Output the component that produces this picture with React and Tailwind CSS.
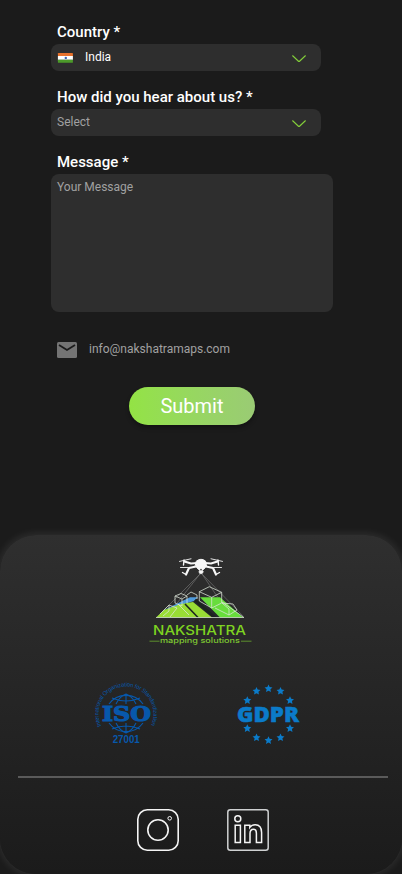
const star = (cx, cy, r) =>
  Array.from({ length: 10 }, (_, i) => {
    const a = (Math.PI / 5) * i - Math.PI / 2;
    const d = i % 2 ? r * 0.48 : r;
    return `${cx + d * Math.cos(a)},${cy + d * Math.sin(a)}`;
  }).join(" ");

const STARS = [
  [40.5, 13.7], [52.5, 16.2], [62, 25.5], [62, 53.5], [52.5, 62.7],
  [40.5, 65.5], [28.5, 62.7], [19.3, 53.5], [19.3, 25.5], [28.5, 16.2],
];

function Chevron() {
  return (
    <svg className="mt-[5px] h-2 w-4" viewBox="0 0 16 8" fill="none" stroke="#84cf3a" strokeWidth="1.1">
      <path d="M1.4 .5 7.2 6Q8 6.8 8.8 6L14.6 .5" />
    </svg>
  );
}

function Flag() {
  return (
    <svg className="mt-[3px] h-[10px] w-4" viewBox="0 0 16 10">
      <rect x=".9" width="15" height="3.4" rx=".6" fill="#e8722c" />
      <rect x=".9" y="3" width="15" height="3.8" fill="#fff" />
      <rect x=".9" y="6.7" width="15" height="3.1" rx=".6" fill="#4c9a2a" />
      <circle cx="8.8" cy="4.9" r="1.2" fill="#3f63b5" />
    </svg>
  );
}

function Field({ label, children }) {
  return (
    <div className="mb-[14px]">
      <label className="block h-[24px] pl-[6px] text-[15px] leading-[24px] font-medium text-white">{label}</label>
      <div className="flex h-[27px] w-[270px] items-center justify-between rounded-lg bg-[#2e2e2e] pr-[14px] pb-[2px] pl-[6px]">
        {children}
      </div>
    </div>
  );
}

function NakshatraLogo() {
  return (
    <svg className="h-24 w-28" viewBox="0 0 112 96">
      <path d="M55 22 12 65M55 22 29 55M57 22 98 64M57 22 78 53" stroke="#7c7c7c" strokeWidth=".6" fill="none" />
      <path d="M11 65.5 40 47 53 45.3H75L99 65.5Z" fill="#25292a" />
      <path d="M18 58.5 45 45.3H53L49 49 33 54Z" fill="#4f9bdc" />
      <path d="M11 65.5 19 58 36 52 48 50 67 65.5Z" fill="#99dd35" />
      <path d="M55 45.3H75L98 65.5H75Z" fill="#68dd3c" />
      <path d="M40 52 53 65.5" stroke="#1c2420" strokeWidth="1.6" />
      <path d="M50 48 70 65.5" stroke="#1c2420" strokeWidth="2.6" />
      <g stroke="#dce6d8" strokeWidth=".75" fill="none">
        <path d="M11 65.5H99L77 50" />
        <path d="M54.3 39.7 64.3 34.7 76.7 40.3V51L66.7 56 54.3 49ZM54.3 39.7 66.7 45.3 76.7 40.3M66.7 45.3V56" />
        <path d="M30 44 36 41.5 42 44V51M30 44 37 47 42 44M30 44V51L37 54V47M42 43 46 40 52 43V47" />
        <path d="M15 62 24 53 32 56 25 65M24 53V59L18 64M33 52 44 63M77 51 88 52 92 58 84 63 70 56M84 63V57L77 51" />
      </g>
      <g fill="#f7f7f7" stroke="#f7f7f7" strokeLinejoin="round" strokeLinecap="round">
        <path d="M51.5 9Q56 5.5 60.5 9L61.5 14 58.5 17.5H53.5L50.5 14Z" strokeWidth="1" />
        <path d="M52 11 46 11.5 39.5 9.5M60 11 66 11.5 72.5 9.5" fill="none" strokeWidth="2.2" />
        <path d="M51 14.5 44 16 41 22.5M61 14.5 68 16 71 22.5" fill="none" strokeWidth="2.2" />
        <path d="M34.5 9.4 46 6.8M66 6.8 77.5 9.4M35.5 15.5 43 15.5M69 15.5 76.5 15.5" fill="none" strokeWidth=".9" />
        <path d="M39 8 38.5 13M73 8 73.5 13M41 22.5 37.5 20.5M71 22.5 74.5 20.5" fill="none" strokeWidth="1.4" />
        <circle cx="56" cy="19.8" r="2" strokeWidth=".7" />
      </g>
      <circle cx="56" cy="17.6" r=".9" fill="#444" />
      <text x="8" y="82.6" textLength="93" lengthAdjust="spacingAndGlyphs" fontFamily="Inter, sans-serif" fontSize="12.6" fontWeight="500" fill="#7ed321">NAKSHATRA</text>
      <text x="15" y="91" textLength="80" lengthAdjust="spacingAndGlyphs" fontFamily="Inter, sans-serif" fontSize="7.3" fontWeight="500" fill="#7fc832">mapping solutions</text>
      <path d="M4.5 89.2H14.5M96 89.2H106.5" stroke="#6ba92f" strokeWidth=".8" />
    </svg>
  );
}

function IsoBadge() {
  return (
    <svg className="size-20" viewBox="0 0 80 80" fill="#0758ac">
      <path id="iso-arc" d="M16.3 51A27.5 27.5 0 1 1 65.7 51" fill="none" />
      <text fontFamily="Liberation Sans, sans-serif" fontSize="5.8">
        <textPath href="#iso-arc" textLength="110" lengthAdjust="spacing">International Organization for Standardization</textPath>
      </text>
      <g fill="none" stroke="#0758ac" strokeWidth="1.1">
        <path d="M24 29A21 21 0 0 1 58 29M24 48A21 21 0 0 0 58 48" />
        <path d="M31 29Q35 21 41 19Q47 21 51 29M31 48Q35 56 41 58Q47 56 51 48M41 19V29M41 48V58M27 23Q41 29 55 23M27 54Q41 48 55 54" />
      </g>
      <text x="17" y="45.8" textLength="49" lengthAdjust="spacingAndGlyphs" fontFamily="DejaVu Serif, serif" fontWeight="700" fontSize="21" stroke="#0758ac" strokeWidth="1.2">ISO</text>
      <text x="27.7" y="68" textLength="27" lengthAdjust="spacingAndGlyphs" fontFamily="Liberation Sans, sans-serif" fontWeight="700" fontSize="10.2">27001</text>
    </svg>
  );
}

function GdprBadge() {
  return (
    <svg className="size-20" viewBox="0 0 80 80" fill="#0b7bc9">
      {STARS.map(([x, y]) => (
        <polygon key={`${x}-${y}`} points={star(x, y, 4.2)} />
      ))}
      <text x="9" y="46.5" textLength="62" lengthAdjust="spacingAndGlyphs" fontFamily="Open Sans, sans-serif" fontWeight="800" fontSize="20.7" stroke="#0b7bc9" strokeWidth=".5">GDPR</text>
    </svg>
  );
}

export default function App() {
  return (
    <div className="flex h-[874px] w-[402px] flex-col overflow-hidden bg-[#1b1b1b] font-['Roboto',sans-serif]">
      <form className="h-[535px] shrink-0 pt-5 pl-[51px]">
        <Field label="Country *">
          <span className="flex items-center gap-3 text-xs text-white"><Flag />India</span>
          <Chevron />
        </Field>
        <Field label="How did you hear about us? *">
          <span className="text-xs text-[#a1a1a1]">Select</span>
          <Chevron />
        </Field>
        <label className="block h-6 pl-[6px] text-[15px] leading-6 font-medium text-white">Message *</label>
        <div className="h-[138px] w-[282px] rounded-lg bg-[#2e2e2e] px-[6px] pt-[5px] text-xs text-[#a1a1a1]">Your Message</div>
        <div className="mt-7 flex h-[18px] items-center gap-3 pl-[6px] text-xs text-[#a1a1a1]">
          <svg className="mt-0.5 h-4 w-5" viewBox="0 0 20 16">
            <rect width="20" height="16" rx="1.5" fill="#747474" />
            <path d="M2 3 10 8 18 3" fill="none" stroke="#1b1b1b" strokeWidth="1.8" />
          </svg>
          info@nakshatramaps.com
        </div>
        <button type="button" className="mt-[29px] ml-[78px] block h-[38px] w-[126px] rounded-full bg-linear-to-r from-[#93e344] to-[#9acb74] text-xl text-white shadow-[0_3px_4px_rgba(0,0,0,0.3)]">Submit</button>
      </form>
      <footer className="flex h-[339px] shrink-0 flex-col rounded-[36px] bg-linear-to-b from-[#2f2f2f] to-[#1b1b1b] pt-[17px] shadow-[0_0_8px_1px_rgba(255,255,255,0.1)]">
        <div className="pl-[145px]"><NakshatraLogo /></div>
        <div className="mt-[27px] flex gap-[63px] pl-[85px]">
          <IsoBadge />
          <GdprBadge />
        </div>
        <div className="mt-[21px] ml-[18px] h-[2px] w-[370px] bg-[#5a5a5a]" />
        <div className="mt-[31px] flex gap-12 pl-[137px]">
          <svg className="size-[42px]" viewBox="0 0 42 42" fill="none" stroke="#f5f5f5" strokeWidth="1.6">
            <rect x=".8" y=".8" width="40.4" height="40.4" rx="9.5" />
            <circle cx="21" cy="21" r="10.2" />
            <circle cx="32.7" cy="9.3" r="1.8" strokeWidth="1" />
          </svg>
          <svg className="size-[42px]" viewBox="0 0 42 42" fill="none" strokeWidth="1.5">
            <rect x=".8" y=".8" width="40.4" height="40.4" rx="2.5" stroke="#cfd1d2" />
            <g stroke="#f5f5f5">
              <circle cx="10.8" cy="9.8" r="3" />
              <path d="M8.2 16.2H13.4V33.5H8.2ZM17.8 16.2H22.8V18.4C24.2 16.4 26 15.7 28.2 15.7C32.6 15.7 34.6 18.5 34.6 23.5V33.5H29.4V24.3C29.4 21.6 28.5 20.2 26.5 20.2C24.2 20.2 23 21.8 23 24.5V33.5H17.8Z" />
            </g>
          </svg>
        </div>
      </footer>
    </div>
  );
}
